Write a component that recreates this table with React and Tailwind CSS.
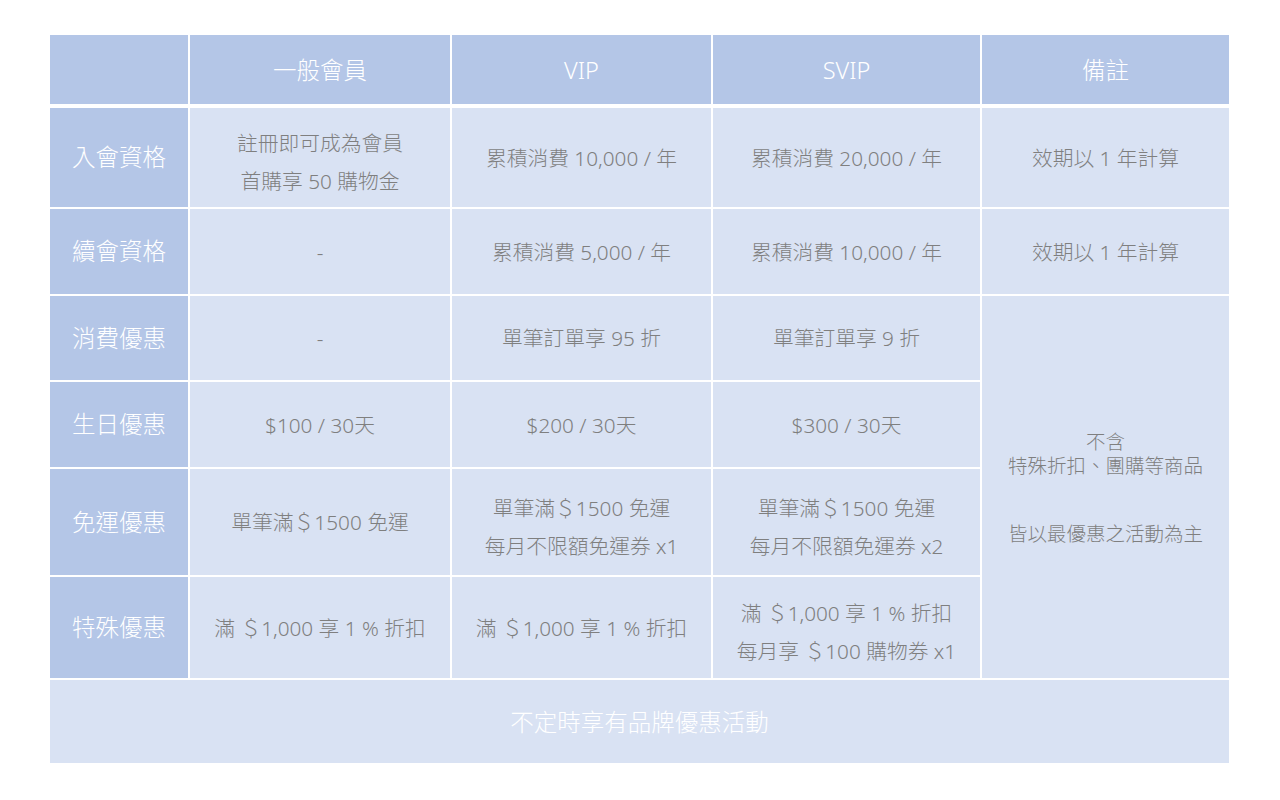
import React from 'react';

const rows = [
  {
    label: '入會資格',
    h: 'h-[99px]',
    cells: [['註冊即可成為會員', '首購享 50 購物金'], ['累積消費 10,000 / 年'], ['累積消費 20,000 / 年']],
    note: '效期以 1 年計算',
  },
  {
    label: '續會資格',
    h: 'h-[85px]',
    cells: [['-'], ['累積消費 5,000 / 年'], ['累積消費 10,000 / 年']],
    note: '效期以 1 年計算',
  },
  {
    label: '消費優惠',
    h: 'h-[84px]',
    cells: [['-'], ['單筆訂單享 95 折'], ['單筆訂單享 9 折']],
  },
  {
    label: '生日優惠',
    h: 'h-[85px]',
    cells: [['$100 / 30天'], ['$200 / 30天'], ['$300 / 30天']],
  },
  {
    label: '免運優惠',
    h: 'h-[106px]',
    cells: [
      ['單筆滿＄1500 免運'],
      ['單筆滿＄1500 免運', '每月不限額免運券 x1'],
      ['單筆滿＄1500 免運', '每月不限額免運券 x2'],
    ],
  },
  {
    label: '特殊優惠',
    h: 'h-[101px]',
    cells: [
      ['滿 ＄1,000 享 1 % 折扣'],
      ['滿 ＄1,000 享 1 % 折扣'],
      ['滿 ＄1,000 享 1 % 折扣', '每月享 ＄100 購物券 x1'],
    ],
  },
];

const cols = 'grid-cols-[138px_260px_259px_267px_247px]';

const Cell = ({ lines }) => (
  <div
    className={`flex flex-col items-center justify-center bg-[#d9e2f3] text-[20.75px] font-light leading-[38px] text-[#7f7f7f] ${
      lines.length > 1 ? 'pt-[9px]' : ''
    }`}
  >
    {lines.map((line) => (
      <div key={line}>{line}</div>
    ))}
  </div>
);

const App = () => {
  return (
    <div
      className="min-h-[800px] bg-white pl-[50px] pt-[35px]"
      style={{ fontFamily: '"Noto Sans", "Noto Sans CJK TC", sans-serif' }}
    >
      <div className="w-[1179px] bg-white">
        <div className={`grid ${cols} h-[69px] gap-x-[2px] bg-white`}>
          <div className="bg-[#b4c6e7]" />
          {['一般會員', 'VIP', 'SVIP', '備註'].map((title) => (
            <div
              key={title}
              className="flex items-center justify-center bg-[#b4c6e7] pt-[3px] text-[23.5px] font-light text-white"
            >
              {title}
            </div>
          ))}
        </div>

        <div className={`mt-[4px] grid ${cols} gap-[2px] bg-white`}>
          {rows.map((row, i) => (
            <React.Fragment key={row.label}>
              <div
                className={`${row.h} flex items-center justify-center bg-[#b4c6e7] pt-[1px] text-[23.5px] font-light text-white`}
              >
                {row.label}
              </div>
              {row.cells.map((lines, j) => (
                <Cell key={j} lines={lines} />
              ))}
              {row.note && <Cell lines={[row.note]} />}
              {i === 2 && (
                <div className="row-span-4 flex flex-col items-center justify-center bg-[#d9e2f3] pt-[2px] text-[19.5px] font-light leading-[24px] text-[#7f7f7f]">
                  <div>不含</div>
                  <div>特殊折扣、團購等商品</div>
                  <div className="mt-[44px]">皆以最優惠之活動為主</div>
                </div>
              )}
            </React.Fragment>
          ))}
          <div className="col-span-5 flex h-[83px] items-center justify-center bg-[#d9e2f3] pt-[2px] text-[23.5px] font-light text-white">
            不定時享有品牌優惠活動
          </div>
        </div>
      </div>
    </div>
  );
};

export default App;
